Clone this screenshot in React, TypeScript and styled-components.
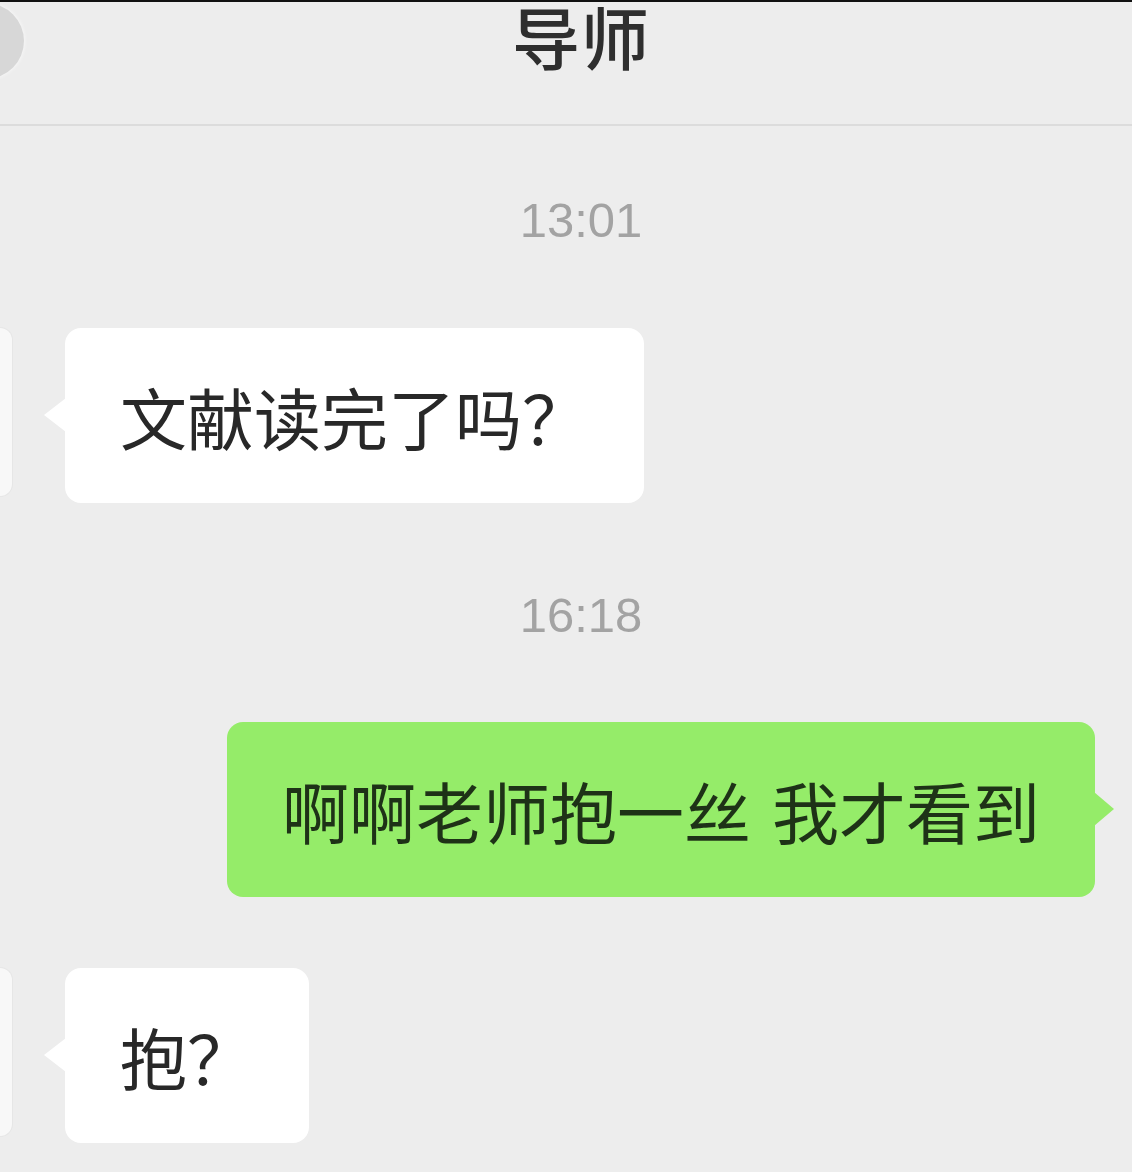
import React from "react";
import styled, { createGlobalStyle } from "styled-components";

const GlobalStyle = createGlobalStyle`
  html, body {
    margin: 0;
    padding: 0;
    background: #ededed;
  }
  body {
    font-family: "Noto Sans CJK SC", "Noto Sans", sans-serif;
  }
`;

const Page = styled.div`
  width: 1132px;
  height: 1172px;
  overflow: hidden;
  background: #ededed;
  border-top: 2px solid #111;
  box-sizing: border-box;
  display: flex;
  flex-direction: column;
`;

const Header = styled.header`
  position: relative;
  height: 124px;
  flex-shrink: 0;
  border-bottom: 2px solid #dcdcdc;
  box-sizing: border-box;
  display: flex;
  justify-content: center;
  align-items: flex-start;
  padding-top: 0;
  padding-left: 30px;
`;

const BackButton = styled.div`
  position: absolute;
  left: -52px;
  top: 1px;
  width: 76px;
  height: 76px;
  border-radius: 50%;
  background: #d7d7d7;
  box-shadow: 0 0 4px rgba(255, 255, 255, 0.8);
`;

const Title = styled.h1`
  margin: 0;
  font-size: 68px;
  line-height: 68px;
  font-weight: 500;
  color: #2e2e2e;
  letter-spacing: 1px;
`;

const List = styled.main`
  display: flex;
  flex-direction: column;
  padding-top: 64px;
`;

const Timestamp = styled.div<{ $mb: number }>`
  height: 60px;
  line-height: 60px;
  text-align: center;
  padding-left: 30px;
  font-family: "Liberation Sans", Arial, sans-serif;
  font-size: 49px;
  color: #a3a3a3;
  margin-bottom: ${(p) => p.$mb}px;
`;

const Row = styled.div<{ $mine?: boolean; $mb: number }>`
  display: flex;
  align-items: flex-start;
  justify-content: ${(p) => (p.$mine ? "flex-end" : "flex-start")};
  padding-right: ${(p) => (p.$mine ? "37px" : "0")};
  margin-bottom: ${(p) => p.$mb}px;
`;

const Avatar = styled.div`
  width: 170px;
  height: 168px;
  margin-left: -158px;
  border-radius: 12px;
  background: #f8f8f8;
  box-shadow: 0 0 0 1px #e6e6e6;
  flex-shrink: 0;
`;

const Bubble = styled.div<{ $mine?: boolean }>`
  position: relative;
  height: 175px;
  box-sizing: border-box;
  display: flex;
  align-items: center;
  padding: 0 55px 0 55px;
  margin-left: ${(p) => (p.$mine ? "0" : "53px")};
  border-radius: 16px;
  background: ${(p) => (p.$mine ? "#95ec69" : "#ffffff")};
  color: ${(p) => (p.$mine ? "#1e3217" : "#282828")};
  font-size: 67px;
  line-height: 1;
  white-space: pre;
  word-spacing: 6px;

  &::before {
    content: "";
    position: absolute;
    top: 70px;
    ${(p) => (p.$mine ? "right: -19px;" : "left: -21px;")}
    width: 0;
    height: 0;
    border-top: 17px solid transparent;
    border-bottom: 17px solid transparent;
    ${(p) =>
      p.$mine
        ? "border-left: 20px solid #95ec69;"
        : "border-right: 22px solid #ffffff;"}
  }
`;

export default function App() {
  return (
    <>
      <GlobalStyle />
      <Page>
        <Header>
          <BackButton />
          <Title>导师</Title>
        </Header>
        <List>
          <Timestamp $mb={78}>13:01</Timestamp>
          <Row $mb={82}>
            <Avatar />
            <Bubble>文献读完了吗？</Bubble>
          </Row>
          <Timestamp $mb={77}>16:18</Timestamp>
          <Row $mine $mb={71}>
            <Bubble $mine>啊啊老师抱一丝 我才看到</Bubble>
          </Row>
          <Row $mb={0}>
            <Avatar />
            <Bubble>抱？</Bubble>
          </Row>
        </List>
      </Page>
    </>
  );
}
